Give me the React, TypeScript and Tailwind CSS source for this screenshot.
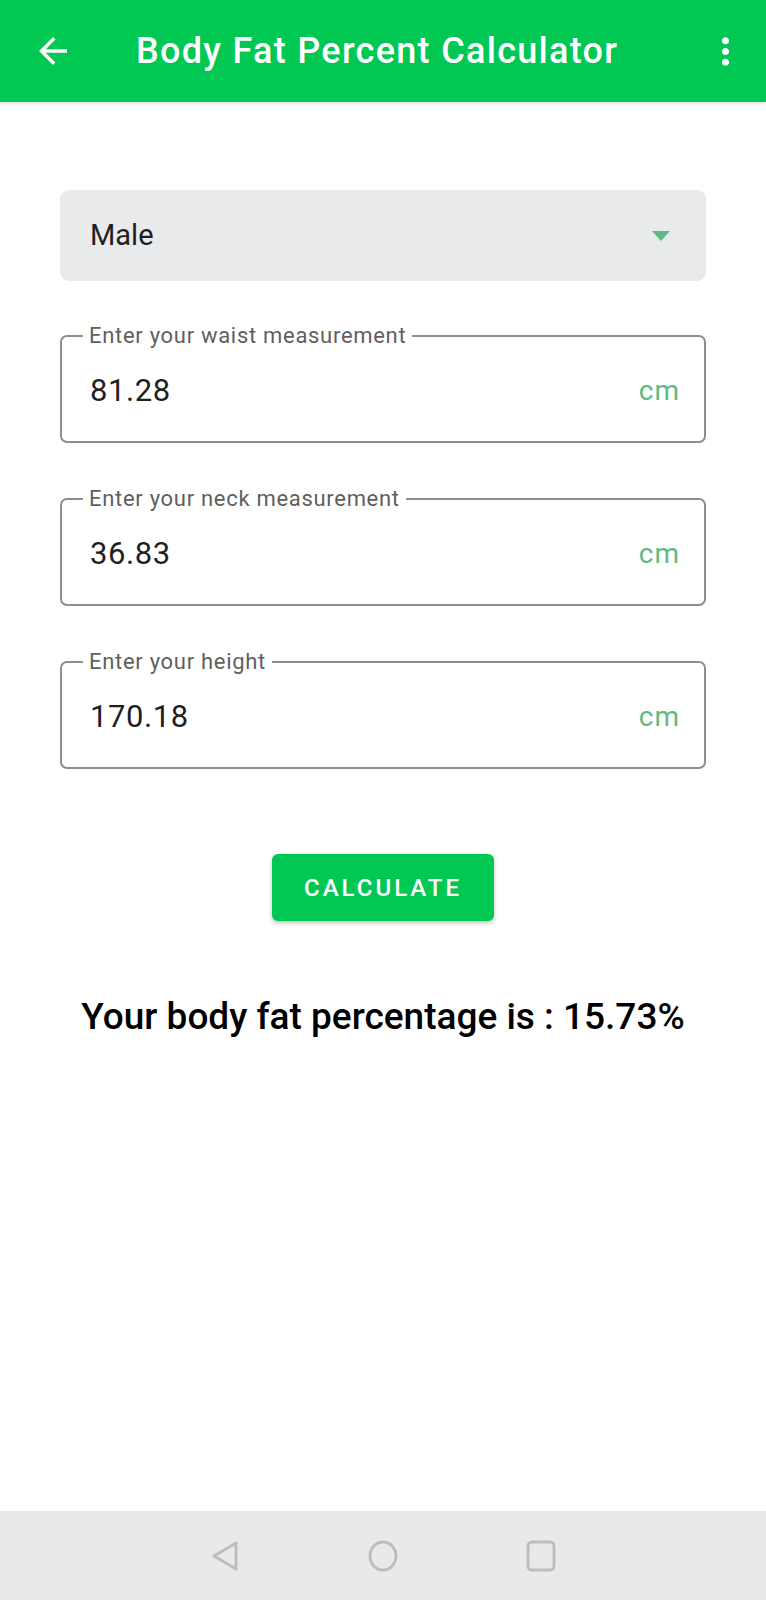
import React from "react";

const fields = [
  { label: "Enter your waist measurement", value: "81.28" },
  { label: "Enter your neck measurement", value: "36.83" },
  { label: "Enter your height", value: "170.18" },
];

const Field = ({ label, value }: { label: string; value: string }) => {
  return (
    <fieldset className="border-2 border-[#8e8e8e] rounded-[7px] px-0">
      <legend className="ml-[21px] px-[6px] text-[22px] leading-[24px] tracking-[0.7px] text-[#5f5f5f]">
        {label}
      </legend>
      <div className="flex items-center justify-between h-[93px] pb-[7px] pl-[28px] pr-[24px]">
        <span className="text-[31px] tracking-[0.6px] text-[#1f1f1f]">{value}</span>
        <span className="text-[28px] tracking-[1px] text-[#5dbb82]">cm</span>
      </div>
    </fieldset>
  );
};

const App = () => {
  return (
    <div className="flex flex-col min-h-[1600px] bg-white font-['Roboto',_sans-serif]">
      <header className="flex items-center h-[102px] bg-[#00c853] shadow-[0_2px_3px_rgba(0,0,0,0.12)]">
        <svg viewBox="0 0 24 24" className="w-[42px] h-[42px] ml-[32px] fill-white">
          <path d="M20 11H7.83l5.59-5.59L12 4l-8 8 8 8 1.41-1.41L7.83 13H20v-2z" />
        </svg>
        <h1 className="ml-[62px] text-[36px] font-medium text-white tracking-[1.3px]">
          Body Fat Percent Calculator
        </h1>
        <svg viewBox="0 0 24 24" className="w-[43px] h-[43px] ml-auto mr-[19px] fill-white">
          <path d="M12 8c1.1 0 2-.9 2-2s-.9-2-2-2-2 .9-2 2 .9 2 2 2zm0 2c-1.1 0-2 .9-2 2s.9 2 2 2 2-.9 2-2-.9-2-2-2zm0 6c-1.1 0-2 .9-2 2s.9 2 2 2 2-.9 2-2-.9-2-2-2z" />
        </svg>
      </header>

      <main className="flex flex-col px-[60px] pt-[88px]">
        <div className="flex items-center justify-between h-[91px] rounded-[9px] bg-[#e9eaec] pl-[30px] pr-[36px]">
          <span className="text-[29px] text-[#1f1f1f]">Male</span>
          <svg viewBox="0 0 18 10" className="w-[18px] h-[10px] fill-[#5dbb82]">
            <path d="M0 0h18L9 10z" />
          </svg>
        </div>

        <div className="flex flex-col gap-[44px] mt-[43px]">
          {fields.map((f) => (
            <Field key={f.label} label={f.label} value={f.value} />
          ))}
        </div>

        <div className="flex justify-center mt-[85px]">
          <button className="w-[222px] h-[67px] rounded-[6px] bg-[#00c853] text-white text-[24px] font-medium tracking-[3px] shadow-[0_2px_4px_rgba(0,0,0,0.25)]">
            CALCULATE
          </button>
        </div>

        <p className="mt-[75px] text-center text-[37px] leading-[42px] font-medium text-black">
          Your body fat percentage is : 15.73%
        </p>
      </main>

      <div className="flex-1" />

      <nav className="flex items-center justify-center gap-[127px] h-[89px] bg-[#e9e9e9]">
        <svg viewBox="0 0 30 32" className="w-[30px] h-[32px] fill-none stroke-[#bdbdbd] stroke-[3]" strokeLinejoin="round">
          <path d="M26 3v26L4 16z" />
        </svg>
        <svg viewBox="0 0 32 32" className="w-[32px] h-[32px] fill-none stroke-[#bdbdbd] stroke-[3]">
          <ellipse cx="16" cy="16" rx="13" ry="14" />
        </svg>
        <svg viewBox="0 0 30 32" className="w-[30px] h-[32px] fill-none stroke-[#bdbdbd] stroke-[3]">
          <rect x="2" y="2" width="26" height="28" rx="4" />
        </svg>
      </nav>
    </div>
  );
};

export default App;
